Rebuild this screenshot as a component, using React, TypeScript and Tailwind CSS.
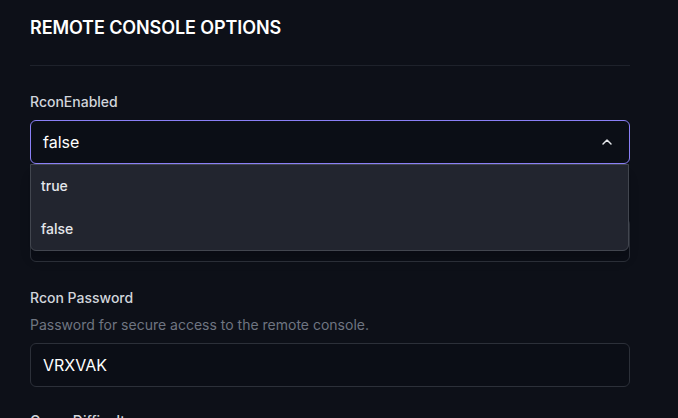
import React from 'react'
import { ChevronUp } from 'lucide-react'

export default function App() {
  return (
    <div className="min-h-screen w-full bg-[#0d1018] overflow-hidden" style={{ fontFamily: 'Inter, "Noto Sans", sans-serif' }}>
      <div className="w-[600px] ml-[30px]">
        {/* header */}
        <div className="pt-[14px] pb-[23px] border-b border-[#1e222b]">
          <h2 className="text-lg leading-7 font-semibold text-white tracking-[-0.1px]">REMOTE CONSOLE OPTIONS</h2>
        </div>

        <div className="flex flex-col pt-[26px]">
          {/* RconEnabled with open listbox */}
          <div className="relative z-10">
            <label className="block text-sm leading-5 font-medium text-[#d1d5db] mb-2">RconEnabled</label>
            <div className="relative">
              <button className="w-full h-[44px] flex items-center justify-between pl-3 pr-[14px] rounded-md border border-[#8a7ff5] bg-[#0b0e16] text-base text-white text-left">
                <span>false</span>
                <ChevronUp size={16} strokeWidth={2.2} className="text-gray-200" />
              </button>
              <ul className="absolute left-0 right-[1px] top-full rounded-b-md border border-[#42464f] bg-[#22252f] shadow-lg">
                <li className="h-[42px] flex items-center px-[10px] text-sm font-medium text-[#e5e7eb]">true</li>
                <li className="h-[43px] flex items-center px-[10px] text-sm font-medium text-[#e5e7eb]">false</li>
              </ul>
            </div>
          </div>

          {/* next field, covered by the open list */}
          <div className="mt-[26px]">
            <div className="h-5 mb-2" />
            <div className="w-full h-[44px] rounded-md border border-[#2c3039] bg-[#0b0e16]" />
          </div>

          {/* Rcon Password */}
          <div className="mt-[26px]">
            <label className="block text-sm leading-5 font-medium text-[#d1d5db] mb-[7px]">Rcon Password</label>
            <p className="text-sm leading-5 text-[#6f7581] mb-2">Password for secure access to the remote console.</p>
            <input
              readOnly
              value="VRXVAK"
              className="w-full h-[44px] px-3 rounded-md border border-[#2c3039] bg-[#0b0e16] text-base text-white outline-none"
            />
          </div>

          {/* Game Difficulty */}
          <div className="mt-6">
            <label className="block text-sm leading-5 font-medium text-[#d1d5db] mb-2">Game Difficulty</label>
            <input
              readOnly
              value="Normal"
              className="w-full h-[44px] px-3 rounded-md border border-[#2c3039] bg-[#0b0e16] text-base text-white outline-none"
            />
          </div>
        </div>
      </div>
    </div>
  )
}
